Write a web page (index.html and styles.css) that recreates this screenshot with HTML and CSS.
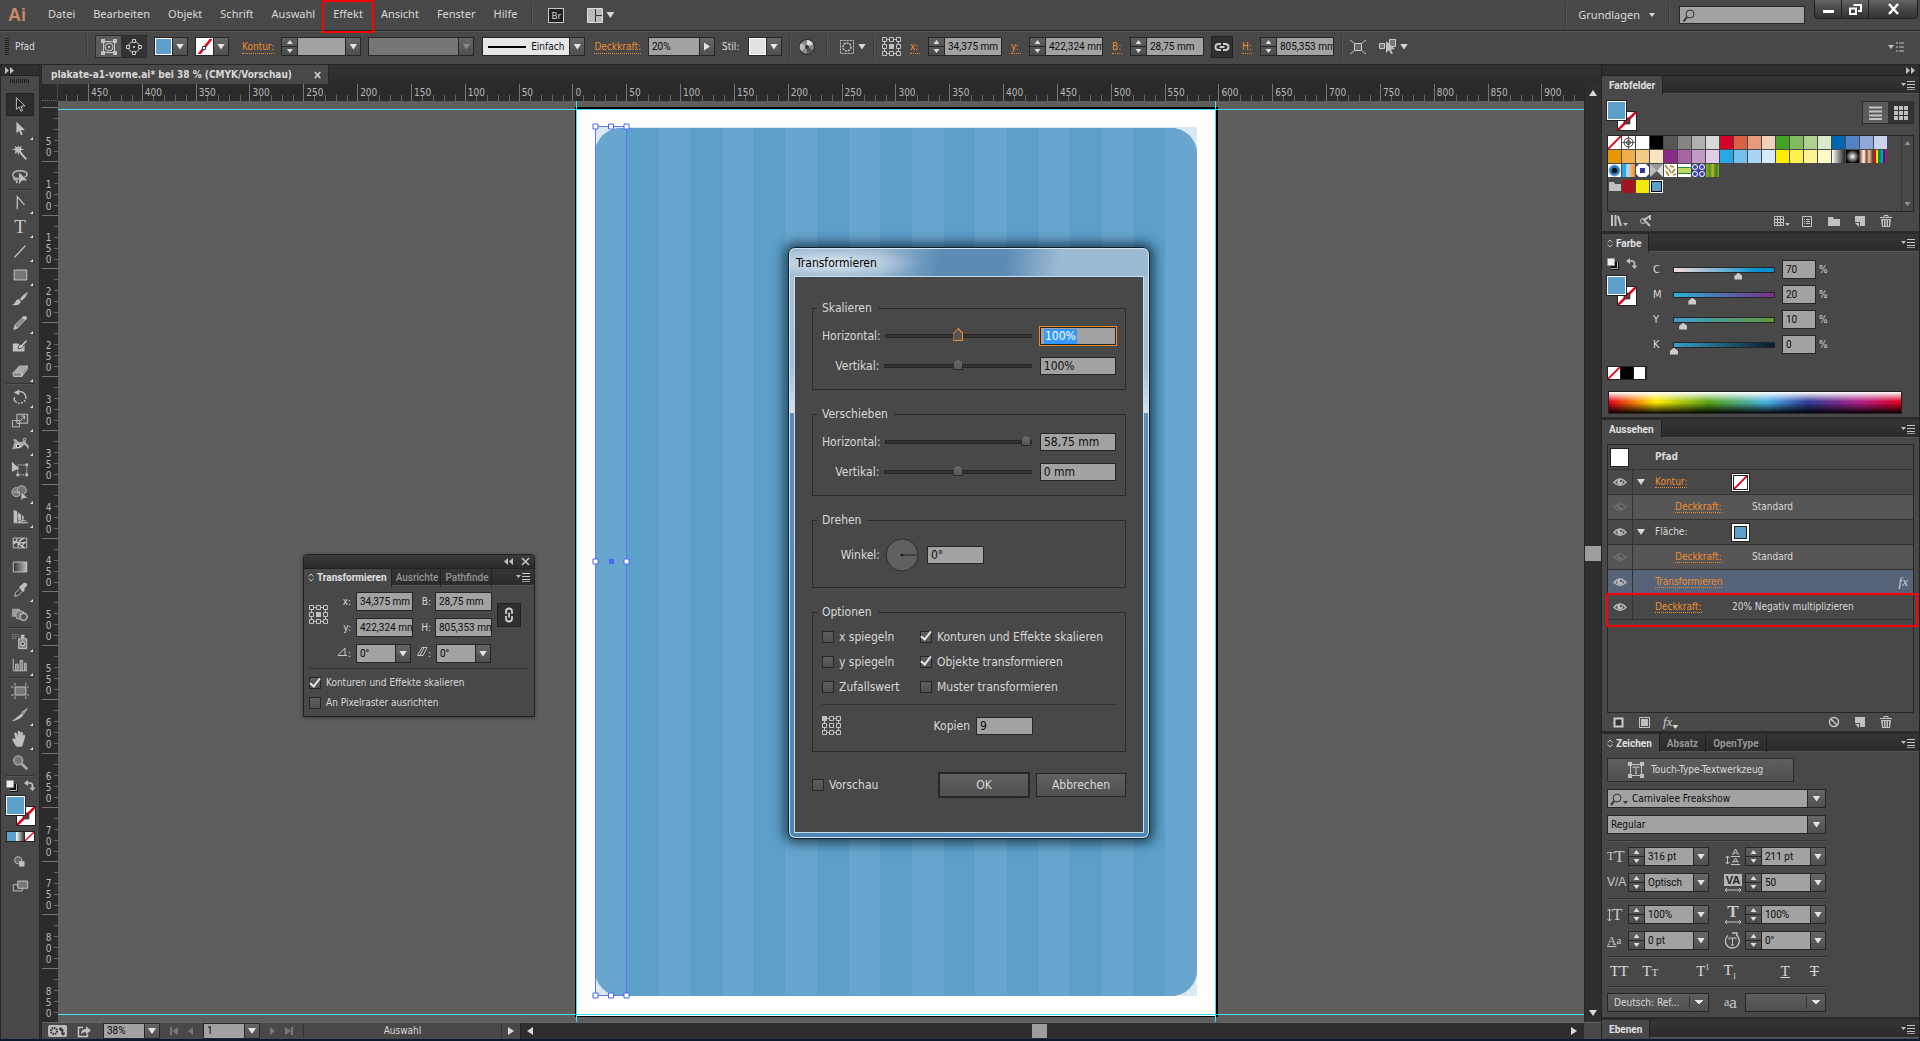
FILE: index.html
```html
<!DOCTYPE html>
<html lang="de">
<head>
<meta charset="utf-8">
<title>plakate-a1-vorne.ai</title>
<link rel="stylesheet" href="styles.css">
</head>
<body>
<svg class="defs" aria-hidden="true">
  <symbol id="ref" viewBox="0 0 19 19"><path d="M5 2.500h3M11 2.500h3M5 16.500h3M11 16.500h3M2.500 5v2M16.500 5v2M2.500 12v2M16.500 12v2" class="ln"/><path d="M.5.500h4v4h-4zM7.500.500h4v4h-4zM14.500.500h4v4h-4zM.5 7.500h4v4h-4zM14.500 7.500h4v4h-4zM.5 14.500h4v4h-4zM7.500 14.500h4v4h-4zM14.500 14.500h4v4h-4zM7.500 7.500h4v4h-4z" class="ln"/></symbol>
  <symbol id="menu" viewBox="0 0 14 10"><path d="M0 3h5L2.500 6z" class="fl"/><path d="M6 1.500h8M6 4.500h8M6 7.500h8M6 9.800h8" class="ln"/></symbol>
  <symbol id="new" viewBox="0 0 12 12"><path d="M1 1h10v10H6V7H1z" class="fl"/><path d="M1 8h4v4z" class="fl"/></symbol>
  <symbol id="trash" viewBox="0 0 12 12"><path d="M0 2.500h12M4 2V.500h4V2" class="ln"/><path d="M1 4h10l-1 8H2z" class="fl"/><path d="M3.500 5v6M6 5v6M8.500 5v6" stroke="#484848" fill="none"/></symbol>
  <symbol id="eye" viewBox="0 0 14 10"><path d="M1 5.500Q7-1.500 13 5.500 7 11 1 5.500z" fill="none" stroke="currentColor" stroke-width="1.500"/><circle cx="7" cy="5" r="2.800" fill="currentColor"/><circle cx="8" cy="4" r="1" fill="#333"/></symbol>
  <symbol id="defcol" viewBox="0 0 12 12"><path d="M4 4h8v8H4z" fill="#111"/><path d="M10.500 4v6.500H4" fill="none" stroke="#bbb"/><path d="M.5.500h7v7h-7z" fill="#eee" stroke="#999"/></symbol>
  <symbol id="swap" viewBox="0 0 11 11"><path d="M2 3h4q2.500 0 2.500 3v3" class="ln" stroke-width="1.500"/><path d="M0 3l4-3v6zM5.500 7.500h6l-3 3.500z" class="fl"/></symbol>
  <symbol id="folder" viewBox="0 0 12 10"><path d="M0 1h5l1 2h6v7H0z" class="fl"/></symbol>
  <symbol id="link" viewBox="0 0 16 10"><path d="M7 2H4.500a3 3 0 0 0 0 6H7M9 2h2.500a3 3 0 0 1 0 6H9M5.500 5h5" fill="none" stroke="#ccc" stroke-width="1.800"/></symbol>
  <symbol id="none" viewBox="0 0 14 14" preserveAspectRatio="none"><path d="M0 0h14v14H0z" fill="#fff"/><path d="M0 14L14 0" stroke="#e3001b" stroke-width="2"/></symbol>
  <symbol id="updown" viewBox="0 0 6 9"><path d="M.7 3.500L3 1l2.300 2.500M.7 5.500L3 8l2.300-2.500" class="ln"/></symbol>
</svg>

<header class="menubar">
  <span class="logo">Ai</span>
  <nav class="menus" aria-label="Hauptmenü">
    <a href="#datei">Datei</a><a href="#bearbeiten">Bearbeiten</a><a href="#objekt">Objekt</a><a href="#schrift">Schrift</a><a href="#auswahl">Auswahl</a><a href="#effekt" class="marked">Effekt</a><a href="#ansicht">Ansicht</a><a href="#fenster">Fenster</a><a href="#hilfe">Hilfe</a>
  </nav>
  <i class="vsep"></i>
  <button class="bridge">Br</button>
  <button class="plain arrange" aria-label="Dokumente anordnen"><svg width="16" height="15"><path d="M.5.500h15v14H.5z" fill="#bbb" stroke="#ddd"/><path d="M8.500 1v13M9 7.500h6" stroke="#333" fill="none"/></svg><b class="tri"></b></button>
  <span class="grow"></span>
  <i class="vsep"></i>
  <button class="plain workspace">Grundlagen <b class="tri small"></b></button>
  <i class="vsep"></i>
  <label class="search"><svg width="12" height="13"><circle cx="7" cy="5" r="4" fill="none" stroke="#333"/><path d="M4 8L.5 12.500" stroke="#333" stroke-width="2"/></svg><input type="search" aria-label="Suchen"></label>
  <span class="winbtns">
    <button aria-label="Minimieren"><svg width="11" height="10"><path d="M0 6h11v3H0z" fill="#fff"/></svg></button>
    <button aria-label="Wiederherstellen"><svg width="13" height="11"><path d="M4.500 1h7.500v6H9" fill="none" stroke="#fff" stroke-width="2"/><path d="M1 4.500h6V10H1z" fill="none" stroke="#fff" stroke-width="2"/></svg></button>
    <button class="close" aria-label="Schließen"><svg width="11" height="10"><path d="M1 0l9 10M10 0L1 10" stroke="#fff" stroke-width="2.500"/></svg></button>
  </span>
</header>

<section class="control" aria-label="Steuerung">
  <i class="grip"></i>
  <span class="kind">Pfad</span>
  <i class="vsep"></i>
  <span class="pair">
    <button aria-label="Form"><svg width="18" height="18"><path d="M3.500 3.500h11v11h-11z" class="ln"/><circle cx="9" cy="9" r="4" class="ln"/><path d="M8 8h2v2H8zM1 1h4v4H1zM13 1h4v4h-4zM1 13h4v4H1zM13 13h4v4h-4z" class="fl"/></svg></button>
    <button class="on" aria-label="Isolieren"><svg width="18" height="18"><circle cx="9" cy="9" r="5.500" class="ln"/><path d="M8 8h2v2H8z" class="fl"/><path d="M7.500 1.500h3v3h-3zM7.500 13.500h3v3h-3zM1.500 7.500h3v3h-3zM13.500 7.500h3v3h-3z" fill="#333" stroke="#ccc"/></svg></button>
  </span>
  <span class="combo"><button class="sw blue" aria-label="Fläche"></button><button class="drop" aria-label="Fläche wählen"></button></span>
  <span class="combo"><button class="sw" aria-label="Kontur"><svg width="16" height="20"><use href="#none"/><path d="M6.500 8.500h3v3h-3z" fill="#fff" stroke="#333"/></svg></button><button class="drop" aria-label="Konturfarbe wählen"></button></span>
  <label class="lnk first" for="kontur">Kontur:</label>
  <span class="num w80"><span class="spin"><button aria-label="mehr"></button><button aria-label="weniger"></button></span><input id="kontur"><button class="drop" aria-label="Konturstärke"></button></span>
  <span class="combo off w106"><input aria-label="Breitenprofil" disabled><button class="drop" aria-label="Profil wählen" disabled></button></span>
  <span class="combo brush w103"><button class="stroke"><i></i>Einfach</button><button class="drop" aria-label="Pinsel wählen"></button></span>
  <label class="lnk" for="deck">Deckkraft:</label>
  <span class="combo w67"><input id="deck" value="20%"><button class="drop right" aria-label="Deckkraft wählen"></button></span>
  <span class="lbl">Stil:</span>
  <span class="combo"><button class="sw light" aria-label="Stil"></button><button class="drop" aria-label="Stil wählen"></button></span>
  <i class="vsep"></i>
  <button class="plain" aria-label="Bildmaterial neu färben"><svg width="18" height="18"><circle cx="9" cy="9" r="7.500" fill="#888" stroke="#222"/><path d="M9 9V2a7 7 0 0 1 6 4z" fill="#ddd"/><path d="M9 9l6 3a7 7 0 0 1-6 4z" fill="#555"/><path d="M9 9l-6 4a7 7 0 0 1 0-8z" fill="#bbb"/><circle cx="9" cy="9" r="2" fill="#333"/></svg></button>
  <i class="vsep wide"></i>
  <button class="plain" aria-label="Ausrichten"><svg width="16" height="16"><path d="M1.500 1.500h13v13h-13z" class="ln" stroke-dasharray="2 1"/><circle cx="8" cy="8" r="4" class="ln" stroke-width="1.500" stroke-dasharray="2 1"/></svg><b class="tri"></b></button>
  <i class="vsep"></i>
  <svg width="19" height="19" class="refpt"><use href="#ref"/><path d="M7 7h5v5H7z" class="fl"/></svg>
  <label class="lnk ax" for="cx">x:</label>
  <span class="num w74"><span class="spin"><button aria-label="mehr"></button><button aria-label="weniger"></button></span><input id="cx" value="34,375 mm"></span>
  <label class="lnk ax" for="cy">y:</label>
  <span class="num w74"><span class="spin"><button aria-label="mehr"></button><button aria-label="weniger"></button></span><input id="cy" value="422,324 mm"></span>
  <label class="lnk ax" for="cb">B:</label>
  <span class="num w74"><span class="spin"><button aria-label="mehr"></button><button aria-label="weniger"></button></span><input id="cb" value="28,75 mm"></span>
  <button class="chain" aria-label="Proportionen erhalten"><svg width="16" height="10"><use href="#link"/></svg></button>
  <label class="lnk ax" for="ch">H:</label>
  <span class="num w74"><span class="spin"><button aria-label="mehr"></button><button aria-label="weniger"></button></span><input id="ch" value="805,353 mm"></span>
  <i class="vsep"></i>
  <button class="plain" aria-label="Ausgewähltes Objekt isolieren"><svg width="16" height="14"><path d="M4.500 3.500h7v7h-7z" fill="#666" stroke="#ccc"/><path d="M0 0l4 3M16 0l-4 3M0 14l4-3M16 14l-4-3" class="ln"/></svg></button>
  <button class="plain last" aria-label="Ähnliche auswählen"><svg width="18" height="15"><path d="M.5 4.500h5v5h-5zM10.500.500h6v7h-6z" fill="#777" stroke="#ccc"/><path d="M7 2l9 8-4 .5 2 4-2 .5-2-4-3 3z" class="fl"/></svg><b class="tri"></b></button>
  <span class="grow"></span>
  <button class="plain" aria-label="Bedienfeldmenü"><svg width="16" height="12"><path d="M0 4h6L3 8z" class="fl"/><path d="M8 2h2M11 2h5M8 6h2M11 6h5M8 10h2M11 10h5" class="ln"/></svg></button>
</section>

<main class="work">
  <aside class="toolbox" aria-label="Werkzeuge">
    <div class="strip"><svg width="9" height="7"><path d="M0 0l4 3.500L0 7zM5 0l4 3.500L5 7z" class="fl"/></svg></div>
    <i class="gripx"></i>
    <div class="tools">
      <button class="on" aria-label="Auswahl"><svg viewBox="0 0 20 20"><path d="M6 2v13l3-3 2 5 2-1-2-4.500 4.500-.5z" fill="#222" stroke="#ccc"/></svg></button>
      <button class="more" aria-label="Direktauswahl"><svg viewBox="0 0 20 20"><path d="M6 2v13l3-3 2 5 2-1-2-4.500 4.500-.5z" class="fl"/></svg></button>
      <button aria-label="Zauberstab"><svg viewBox="0 0 20 20"><path d="M8 1l1 3 3-2-1 3 4 1-4 1 1 4-3-2-1 4-1-4-3 2 1-4-4-1 4-1-1-3 3 2z" class="fl"/><path d="M10 9l7 8" class="ln" stroke-width="2"/></svg></button>
      <button aria-label="Lasso"><svg viewBox="0 0 20 20"><path d="M9 12q-8-1-7-5t8-4 8 4q0 2-3 3.500M4 10q-2 3 1 3t1 4" fill="none" stroke="#bbb" stroke-width="1.600"/><path d="M9 5v13l3-4 6 0z" class="fl"/></svg></button>
      <hr>
      <button class="more" aria-label="Zeichenstift"><svg viewBox="0 0 20 20"><path d="M7 17V3l8 9" class="ln" stroke-width="1.400"/></svg></button>
      <button class="more ty" aria-label="Text">T</button>
      <button class="more" aria-label="Liniensegment"><svg viewBox="0 0 20 20"><path d="M4 17L16 4" class="ln" stroke-width="1.500"/></svg></button>
      <button class="more" aria-label="Rechteck"><svg viewBox="0 0 20 20"><path d="M3.500 4.500h14v11h-14z" fill="#777" stroke="#ccc"/></svg></button>
      <button aria-label="Pinsel"><svg viewBox="0 0 20 20"><path d="M19 2q-6 3-9 8l2 2q5-4 7-10z" class="fl"/><path d="M9 10q-3 0-4 3-1 3-4 3 7 3 10-3z" class="fl"/></svg></button>
      <button class="more" aria-label="Buntstift"><svg viewBox="0 0 20 20"><path d="M3 17l1.500-5L14 3q3-1 3 2l-9 10z" fill="#888" stroke="#bbb"/><path d="M3 18l1.500-5 3 2.500zM13 3q4-2 5 2l-2 2-4-3z" class="fl"/></svg></button>
      <button aria-label="Tropfenpinsel"><svg viewBox="0 0 20 20"><path d="M2 6h6l2 2q4-1 4-3l1 1v9H2z" class="fl"/><path d="M19 1q-5 2-7 6-4 0-4 5 6 0 6-4 4-3 5-7z" fill="#ccc" stroke="#444"/></svg></button>
      <button class="more" aria-label="Radiergummi"><svg viewBox="0 0 20 20"><path d="M2 12L9 4h9l-6 8z" fill="#aaa"/><path d="M2 12h10v4H3zM12 12l6-8v4l-6 8z" fill="#888" stroke="#ccc"/></svg></button>
      <hr>
      <button class="more" aria-label="Drehen"><svg viewBox="0 0 20 20"><path d="M6 5q7-3 10 3 2 5-3 8t-9-2q-1-2 0-4" class="ln" stroke-width="1.500" stroke-dasharray="16 1.500 2 1.500 2 1.500 2 1.500"/><path d="M3 5l6-3v6z" class="fl"/></svg></button>
      <button class="more" aria-label="Skalieren"><svg viewBox="0 0 20 20"><path d="M6.500 2.500h12v10h-12z" fill="#555" stroke="#ccc"/><path d="M1.500 9.500h8v7h-8z" class="ln"/><path d="M10 10l5-5M11.500 4.500H15V8" class="ln"/></svg></button>
      <button class="more" aria-label="Verkrümmen"><svg viewBox="0 0 20 20"><path d="M1 16q2-6 3-10l-2-2q3-2 5 1t6 1l4-3q-2 4 1 6t1 6q-2-5-5-5-2 4-7 4t-6 2z" fill="#aaa"/><circle cx="8" cy="11" r="2" fill="#333" stroke="#fff"/><circle cx="15" cy="4" r="1.500" fill="#444" stroke="#ccc"/></svg></button>
      <button aria-label="Frei transformieren"><svg viewBox="0 0 20 20"><path d="M7.500 5.500h10v11h-10z" class="ln" stroke-dasharray="2 1"/><path d="M1 2v11l8-3.500zM16 4h3v3h-3zM16 15h3v3h-3zM6 15h3v3H6z" class="fl"/></svg></button>
      <button class="more" aria-label="Formerstellung"><svg viewBox="0 0 20 20"><circle cx="6" cy="9" r="5" fill="#777" stroke="#bbb"/><circle cx="12" cy="7" r="5" fill="#777" stroke="#bbb"/><path d="M3 9h9" stroke="#fff" stroke-dasharray="1 1"/><path d="M11 8v11l3-3 5 0z" class="fl" stroke="#444"/></svg></button>
      <button class="more" aria-label="Perspektivenraster"><svg viewBox="0 0 20 20"><path d="M3 2l4 2v12H3zM8 5l3 2v6H8zM8 14l10 2H8zM12 8l2 1v4l-2-.5z" class="fl"/><path d="M3 9h8M3 16.500h16M8 13l9 1.500" class="ln"/></svg></button>
      <hr>
      <button aria-label="Gitter"><svg viewBox="0 0 20 20"><path d="M2.500 4.500h15v11h-15z" class="ln"/><path d="M2 11q4-1 5-6M2 8q7 3 15 1M8 15q-1-8 6-10M12 15q1-5 5-6M7 9q3 4 8 6" class="ln" stroke-width="1.500"/></svg></button>
      <button aria-label="Verlauf"><svg viewBox="0 0 20 20"><defs><linearGradient id="g1"><stop stop-color="#333"/><stop offset="1" stop-color="#bbb"/></linearGradient></defs><path d="M2.500 4.500h15v11h-15z" fill="url(#g1)" stroke="#ccc"/></svg></button>
      <button class="more" aria-label="Pipette"><svg viewBox="0 0 20 20"><path d="M4 16l1-4 5-5 3 3-5 5z" class="ln"/><path d="M9 5l2-1 3-3q4-1 4 3l-3 3v3l-2 1z" class="fl"/></svg></button>
      <button aria-label="Angleichen"><svg viewBox="0 0 20 20"><path d="M1 3h9v9H1z" fill="#999"/><rect x="5.500" y="5.500" width="9" height="9" rx="3" fill="#777" stroke="#bbb"/><circle cx="14" cy="12" r="4" fill="#555" stroke="#bbb" stroke-width="1.500"/></svg></button>
      <hr>
      <button class="more" aria-label="Symbol aufsprühen"><svg viewBox="0 0 20 20"><path d="M8.500 7.500h9v11h-9z" fill="#888" stroke="#ccc"/><path d="M11 3h4v4h-4z" class="fl"/><circle cx="13" cy="13" r="2" fill="#333" stroke="#eee"/><path d="M1 3h9M2 5h8M1 7h6" class="ln" stroke-dasharray="1 2"/></svg></button>
      <button class="more" aria-label="Diagramm"><svg viewBox="0 0 20 20"><path d="M2.500 3v13.500h15" class="ln"/><path d="M5 9h3v7H5zM10 5h3v11h-3zM15 8h2v8h-2z" fill="#888" stroke="#bbb"/></svg></button>
      <hr>
      <button aria-label="Zeichenfläche"><svg viewBox="0 0 20 20"><path d="M4.500 5.500h12v9h-12z" fill="#777" stroke="#ccc"/><path d="M4.500 1v3M16.500 1v3M4.500 16v3M16.500 16v3M0 5.500h3M18 5.500h2M0 14.500h3M18 14.500h2" class="ln"/></svg></button>
      <button class="more" aria-label="Slice"><svg viewBox="0 0 20 20"><path d="M1 17L12 8l2 2q-5 6-13 7z" class="fl"/><path d="M12 7l6-4-4 6z" fill="#888" stroke="#bbb"/></svg></button>
      <button class="more" aria-label="Hand"><svg viewBox="0 0 20 20"><path d="M6 18l-4-7q0-2 2-1l2 1-2-7q1-2 2 0l2 5V2q1-2 2 0v7l1-6q2-1 2 1l-1 6 2-4q2-1 1 2l-2 7-1 3z" class="fl" stroke="#c0c0c0"/></svg></button>
      <button aria-label="Zoom"><svg viewBox="0 0 20 20"><circle cx="8" cy="7" r="5" fill="#777" stroke="#aaa" stroke-width="1.500"/><path d="M12 11l6 6" stroke="#aaa" stroke-width="3"/></svg></button>
      <hr>
    </div>
    <div class="defrow"><svg width="12" height="12"><use href="#defcol"/></svg><svg width="11" height="11"><use href="#swap"/></svg></div>
    <div class="fs big"><svg class="st" viewBox="0 0 19 19"><use href="#none"/><path d="M6.500 6.500h6v6h-6z" fill="#484848" stroke="#222"/><path d="M0 19L19 0" stroke="#e3001b" stroke-width="1.500"/></svg><i class="fi"></i></div>
    <div class="modes"><i class="blue"></i><i class="grad"></i><svg width="9" height="9"><use href="#none"/></svg></div>
    <div class="tools foot">
      <button aria-label="Zeichenmodus"><svg viewBox="0 0 20 20"><circle cx="8" cy="8" r="4" fill="#666" stroke="#bbb"/><path d="M9 9h6v6H9z" class="fl"/></svg></button>
      <button aria-label="Bildschirmmodus"><svg viewBox="0 0 20 20"><path d="M2.500 8.500h10v7h-10z" class="ln"/><path d="M7.500 4.500h11v8h-11z" fill="#777" stroke="#ccc"/></svg></button>
    </div>
  </aside>

  <section class="doc">
    <div class="tabs"><div class="tab"><span>plakate-a1-vorne.ai* bei 38 % (CMYK/Vorschau)</span><button aria-label="Dokument schließen">×</button></div></div>
    <div class="stage">
      <div class="hruler"><i class="corner"></i><div class="hcells"><span>450</span><span>400</span><span>350</span><span>300</span><span>250</span><span>200</span><span>150</span><span>100</span><span>50</span><span>0</span><span>50</span><span>100</span><span>150</span><span>200</span><span>250</span><span>300</span><span>350</span><span>400</span><span>450</span><span>500</span><span>550</span><span>600</span><span>650</span><span>700</span><span>750</span><span>800</span><span>850</span><span>900</span></div></div>
      <div class="vruler"><span>50</span><span>100</span><span>150</span><span>200</span><span>250</span><span>300</span><span>350</span><span>400</span><span>450</span><span>500</span><span>550</span><span>600</span><span>650</span><span>700</span><span>750</span><span>800</span><span>850</span></div>
      <div class="canvas">
        <div class="artboard"></div>
        <div class="bed"><div class="poster"><i></i><i></i><i></i><i></i><i></i><i></i><i></i><i></i><i></i><i></i><i></i><i></i><i></i><i></i><i></i><i></i><i></i><i></i><i></i></div></div>
        <i class="guide h top"></i><i class="guide h bottom"></i><i class="guide v left"></i><i class="guide v right"></i>
        <svg class="sel" width="38" height="876"><path d="M3.500 3.500h31v869h-31z" fill="none" stroke="#5a78f0"/><g fill="#fff" stroke="#4a66f5"><path d="M1 1h5v5H1zM16.500 1h5v5h-5zM32 1h5v5h-5zM1 436h5v5H1zM32 436h5v5h-5zM1 870h5v5H1zM16.500 870h5v5h-5zM32 870h5v5h-5z"/></g><path d="M17 436h5v5h-5z" fill="#4a66f5"/></svg>

        <section class="float" aria-label="Transformieren Bedienfeld">
          <div class="fhead"><svg width="9" height="7"><path d="M4 0v7L0 3.500zM9 0v7L5 3.500z" class="fl"/></svg><svg width="7" height="7"><path d="M0 0l7 7M7 0L0 7" class="ln" stroke-width="1.600"/></svg></div>
          <div class="ptabs"><button class="act"><svg width="6" height="9"><use href="#updown"/></svg>Transformieren</button><button class="cut">Ausrichte</button><button class="cut">Pathfinde</button><span class="grow"></span><svg class="pm" width="14" height="10"><use href="#menu"/></svg></div>
          <div class="fgrid">
            <svg class="fref" width="19" height="19"><use href="#ref"/><path d="M7 7h5v5H7z" class="fl"/></svg>
            <div class="frow"><label for="fx">x:</label><input id="fx" value="34,375 mm"><label for="fb">B:</label><input id="fb" value="28,75 mm"></div>
            <button class="chain tall" aria-label="Proportionen erhalten"><svg width="10" height="16" viewBox="0 0 10 16"><path d="M2 7V4.500a3 3 0 0 1 6 0V7M2 9v2.500a3 3 0 0 0 6 0V9M5 5.500v5" fill="none" stroke="#ccc" stroke-width="1.800"/></svg></button>
            <div class="frow r2"><label for="fy">y:</label><input id="fy" value="422,324 mm"><label for="fh">H:</label><input id="fh" value="805,353 mm"></div>
            <div class="frow r3"><label for="fa"><svg width="11" height="9"><path d="M1 8.500h9M1 8.500L8 1v7" class="ln"/></svg>:</label><span class="combo"><input id="fa" value="0°"><button class="drop" aria-label="Winkel wählen"></button></span><label for="fv"><svg width="11" height="9"><path d="M.5 8.500L5 .5h5L6 8.500zM3 8.500l4-8" class="ln"/></svg>:</label><span class="combo"><input id="fv" value="0°"><button class="drop" aria-label="Verbiegen wählen"></button></span></div>
          </div>
          <div class="fchecks"><label><input type="checkbox" checked>Konturen und Effekte skalieren</label><label><input type="checkbox">An Pixelraster ausrichten</label></div>
        </section>

        <form class="dialog" role="dialog" aria-label="Transformieren">
          <h2>Transformieren</h2>
          <div class="dbody">
            <fieldset><legend>Skalieren</legend>
              <div class="drow"><label for="sh">Horizontal:</label><input type="range" class="focus" aria-label="Skalieren horizontal" value="50"><input id="sh" class="hot" value="100%"><span class="seltext">100%</span></div>
              <div class="drow"><label for="sv">Vertikal:</label><input type="range" aria-label="Skalieren vertikal" value="50"><input id="sv" value="100%"></div>
            </fieldset>
            <fieldset><legend>Verschieben</legend>
              <div class="drow"><label for="vh">Horizontal:</label><input type="range" aria-label="Verschieben horizontal" value="100"><input id="vh" value="58,75 mm"></div>
              <div class="drow"><label for="vv">Vertikal:</label><input type="range" aria-label="Verschieben vertikal" value="50"><input id="vv" value="0 mm"></div>
            </fieldset>
            <fieldset class="rot"><legend>Drehen</legend>
              <div class="drow"><label for="wi">Winkel:</label><svg width="34" height="34"><circle cx="17" cy="17" r="16" fill="#606060" stroke="#2a2a2a"/><path d="M17 17h15" stroke="#222"/><circle cx="17" cy="17" r="1.500" fill="#222"/></svg><input id="wi" class="short" value="0°"></div>
            </fieldset>
            <fieldset class="opts"><legend>Optionen</legend>
              <div class="checks"><label><input type="checkbox">x spiegeln</label><label><input type="checkbox" checked>Konturen und Effekte skalieren</label><label><input type="checkbox">y spiegeln</label><label><input type="checkbox" checked>Objekte transformieren</label><label><input type="checkbox">Zufallswert</label><label><input type="checkbox">Muster transformieren</label></div>
              <div class="copies"><svg width="19" height="19"><use href="#ref"/><path d="M0 0h5v5H0z" class="fl"/></svg><label for="ko">Kopien</label><input id="ko" class="short" value="9"></div>
            </fieldset>
            <div class="actions"><label><input type="checkbox">Vorschau</label><span class="grow"></span><button type="button" class="ok">OK</button><button type="button">Abbrechen</button></div>
          </div>
        </form>
      </div>
      <div class="vscroll"><b class="tri up"></b><i></i><b class="tri"></b></div>
    </div>
    <footer class="status">
      <svg width="19" height="12"><rect x="0" y="0" width="19" height="12" rx="2" fill="#bbb"/><circle cx="6" cy="6" r="3" fill="none" stroke="#333" stroke-width="2" stroke-dasharray="1.500 .8"/><path d="M12 4h3v5M11 4l2-2v4zM13 8h4l-2 2.500z" stroke="#333" fill="#333" stroke-width=".6"/></svg>
      <svg width="13" height="12" class="share"><path d="M5 2.500H.5v9h9V9" class="ln" stroke-width="1.500"/><path d="M3 9q0-5 5-5V1l5 4.500-5 4V7Q5 7 3 9z" class="fl"/></svg>
      <span class="combo w57"><input aria-label="Zoomstufe" value="38%"><button class="drop" aria-label="Zoom wählen"></button></span>
      <span class="nav"><svg width="8" height="8"><path d="M0 0h2v8H0zM8 0v8L2 4z"/></svg><svg width="5" height="8"><path d="M5 0v8L0 4z"/></svg></span>
      <span class="combo w57"><input aria-label="Zeichenfläche" value="1"><button class="drop" aria-label="Zeichenfläche wählen"></button></span>
      <span class="nav"><svg width="5" height="8"><path d="M0 0v8l5-4z"/></svg><svg width="8" height="8"><path d="M6 0h2v8H6zM0 0v8l6-4z"/></svg></span>
      <span class="tool">Auswahl</span>
      <span class="playbox"><b class="tri rt"></b></span>
      <div class="hscroll"><b class="tri lt"></b><i></i><b class="tri rt"></b></div>
      <i class="sizer"></i>
    </footer>
  </section>

  <aside class="panels">
    <div class="strip"><svg width="9" height="7"><path d="M0 0l4 3.500L0 7zM5 0l4 3.500L5 7z" class="fl"/></svg></div>

    <section class="panel p1">
      <div class="ptabs"><button class="act">Farbfelder</button><span class="grow"></span><svg class="pm" width="14" height="10"><use href="#menu"/></svg></div>
      <div class="pbody">
        <div class="swtop"><div class="fs"><svg class="st" viewBox="0 0 19 19"><use href="#none"/><path d="M6.500 6.500h6v6h-6z" fill="#484848" stroke="#222"/><path d="M0 19L19 0" stroke="#e3001b" stroke-width="1.500"/></svg><i class="fi"></i></div><span class="grow"></span><span class="pair"><button aria-label="Listenansicht"><svg width="13" height="14"><path d="M0 1.500h13M0 5.500h13M0 9.500h13M0 13h13" class="ln" stroke-width="2"/></svg></button><button class="on" aria-label="Miniaturen"><svg width="14" height="14"><path d="M0 0h4v4H0zM5 0h4v4H5zM10 0h4v4h-4zM0 5h4v4H0zM5 5h4v4H5zM10 5h4v4h-4zM0 10h4v4H0zM5 10h4v4H5zM10 10h4v4h-4z" class="fl"/></svg></button></span></div>
        <div class="swbox">
          <div class="swatches">
            <i><svg width="13" height="13"><use href="#none"/></svg></i><i class="c-w"><svg width="13" height="13"><circle cx="6.500" cy="6.500" r="4.500" fill="none" stroke="#333"/><circle cx="6.500" cy="6.500" r="2" fill="none" stroke="#333"/><path d="M6.500 0v13M0 6.500h13" stroke="#333" stroke-width=".7"/></svg></i><i style="background:#fff"></i><i style="background:#000"></i><i style="background:#575757"></i><i style="background:#858585"></i><i style="background:#b0b0b0"></i><i style="background:#d9d9d9"></i><i style="background:#d40027"></i><i style="background:#de6044"></i><i style="background:#e99a7a"></i><i style="background:#f4cfb9"></i><i style="background:#43a125"></i><i style="background:#82ba62"></i><i style="background:#afd293"></i><i style="background:#d9e9cb"></i><i style="background:#0066b3"></i><i style="background:#5082c5"></i><i style="background:#90a8d8"></i><i style="background:#c9d3ee"></i>
            <i style="background:#ea9600"></i><i style="background:#efae4b"></i><i style="background:#f5ca89"></i><i style="background:#fae4c4"></i><i style="background:#8a2b8a"></i><i style="background:#a665a6"></i><i style="background:#c19ac5"></i><i style="background:#decde4"></i><i style="background:#27a8e6"></i><i style="background:#73bfee"></i><i style="background:#a8d5f5"></i><i style="background:#d6ecfb"></i><i style="background:#ffed00"></i><i style="background:#fff04d"></i><i style="background:#fff592"></i><i style="background:#fffacc"></i><i class="g-lin"></i><i class="g-rad"></i><i class="g-cop"></i><i class="g-rain"></i>
            <i class="g-eye"></i><i class="g-sky"></i><i class="c-w"><svg width="13" height="13"><path d="M4 4h5v5H4zM0 0h3L0 3zM13 0v3l-3-3zM0 13v-3l3 3zM13 13h-3l3-3z" fill="#2b3a9b"/></svg></i><i><svg width="13" height="13"><path d="M0 0h13v13H0z" fill="#999"/><path d="M0 0l7 7-7 6z" fill="#bbb"/><path d="M0 13l7-6 6 6z" fill="#555"/><path d="M13 0L7 7l6 6z" fill="#ddd"/></svg></i><i class="c-w"><svg width="13" height="13"><path d="M1 1l3 4M6 2l4 1M11 5l-3 4M2 7l3 5M9 11l3-1M5 5l2 4" stroke="#a8842c" stroke-width="1.500"/></svg></i><i class="g-str"></i><i class="c-w"><svg width="13" height="13"><path d="M0 0h13v13H0z" fill="#3d45a5"/><g fill="none" stroke="#fff"><circle cx="3" cy="3" r="2.500"/><circle cx="10" cy="3" r="2.500"/><circle cx="3" cy="10" r="2.500"/><circle cx="10" cy="10" r="2.500"/></g></svg></i><i class="g-leaf"></i>
          </div>
          <div class="swatches group"><i class="fol"><svg width="12" height="10"><use href="#folder"/></svg></i><i style="background:#a31621"></i><i style="background:#f0ea0a"></i><i class="picked"></i></div>
          <div class="sbar"><b class="tri up small"></b><b class="tri small"></b></div>
        </div>
        <div class="pfoot"><svg width="17" height="12"><path d="M1 0v11M4.500 0v11M7 1l3 10" class="ln" stroke-width="2"/><path d="M12 8h5l-2.500 3z" class="fl"/></svg><svg class="share" width="11" height="12"><circle cx="3" cy="6" r="2.500" class="ln"/><path d="M10 1L4 5l6 6M10 0v5" class="ln" stroke-width="1.800"/></svg><span class="grow"></span><svg class="g26 wide" width="16" height="11"><path d="M.5.500h9v9h-9zM3.500 0v10M6.500 0v10M0 3.500h10M0 6.500h10" class="ln"/><path d="M11 7h5l-2.500 3z" class="fl"/></svg><svg class="g26 wide" width="10" height="11"><path d="M.5.500h9v10h-9zM2 3.500h1M4 3.500h4M2 5.500h1M4 5.500h4M2 7.500h1M4 7.500h4" class="ln"/></svg><svg class="g26" width="12" height="10"><use href="#folder"/></svg><svg class="g26" width="12" height="12"><use href="#new"/></svg><svg width="12" height="12"><use href="#trash"/></svg></div>
      </div>
    </section>

    <section class="panel p2">
      <div class="ptabs"><button class="act"><svg width="6" height="9"><use href="#updown"/></svg>Farbe</button><span class="grow"></span><svg class="pm" width="14" height="10"><use href="#menu"/></svg></div>
      <div class="pbody">
        <div class="color">
          <div class="pick"><div class="defrow"><svg width="12" height="12"><use href="#defcol"/></svg><svg width="11" height="11"><use href="#swap"/></svg></div><div class="fs"><svg class="st" viewBox="0 0 19 19"><use href="#none"/><path d="M6.500 6.500h6v6h-6z" fill="#484848" stroke="#222"/><path d="M0 19L19 0" stroke="#e3001b" stroke-width="1.500"/></svg><i class="fi"></i></div></div>
          <div class="cmyk">
            <div class="c"><label for="c">C</label><input type="range" aria-label="Cyan" value="70"><input id="c" value="70"><span>%</span></div>
            <div class="m"><label for="m">M</label><input type="range" aria-label="Magenta" value="20"><input id="m" value="20"><span>%</span></div>
            <div class="y"><label for="y">Y</label><input type="range" aria-label="Gelb" value="10"><input id="y" value="10"><span>%</span></div>
            <div class="k"><label for="k">K</label><input type="range" aria-label="Schwarz" value="0"><input id="k" value="0"><span>%</span></div>
          </div>
        </div>
        <div class="trio"><svg width="12" height="12"><use href="#none"/></svg><i class="bk"></i><i class="wh"></i></div>
        <div class="spectrum"></div>
      </div>
    </section>

    <section class="panel p3">
      <div class="ptabs"><button class="act">Aussehen</button><span class="grow"></span><svg class="pm" width="14" height="10"><use href="#menu"/></svg></div>
      <div class="pbody">
        <div class="looks">
          <div class="look head"><i class="thumb"></i><b>Pfad</b></div>
          <div class="look"><span class="ey"><svg width="14" height="10"><use href="#eye"/></svg></span><b class="tri"></b><span class="nm"><a href="#kontur">Kontur:</a></span><i class="chip"><svg width="13" height="13"><use href="#none"/></svg></i></div>
          <div class="look sub"><span class="ey dim"><svg width="14" height="10"><use href="#eye"/></svg></span><span class="nm"><a href="#deck">Deckkraft:</a></span><span>Standard</span></div>
          <div class="look"><span class="ey"><svg width="14" height="10"><use href="#eye"/></svg></span><b class="tri"></b><span class="nm">Fläche:</span><i class="chip fill"></i></div>
          <div class="look sub"><span class="ey dim"><svg width="14" height="10"><use href="#eye"/></svg></span><span class="nm"><a href="#deck">Deckkraft:</a></span><span>Standard</span></div>
          <div class="look cur"><span class="ey"><svg width="14" height="10"><use href="#eye"/></svg></span><span class="nm"><a href="#sh">Transformieren</a></span><span class="grow"></span><em class="fx">fx</em></div>
          <div class="look last"><span class="ey"><svg width="14" height="10"><use href="#eye"/></svg></span><span class="nm"><a href="#deck">Deckkraft:</a></span><span>20% Negativ multiplizieren</span></div>
        </div>
        <div class="pfoot"><svg class="g12" width="11" height="11"><path d="M1.500 1.500h8v8h-8z" fill="#333" stroke="#ccc" stroke-width="2"/></svg><svg class="g12" width="11" height="11"><path d="M.5.500h10v10H.5z" class="ln"/><path d="M2 2h7v7H2z" class="fl"/></svg><em class="fx">fx<b class="tri small"></b></em><span class="grow"></span><svg class="g26" width="12" height="12"><circle cx="6" cy="6" r="4.500" class="ln" stroke-width="1.500"/><path d="M3 3l6 6" class="ln" stroke-width="1.500"/></svg><svg class="g26" width="12" height="12"><use href="#new"/></svg><svg width="12" height="12"><use href="#trash"/></svg></div>
      </div>
    </section>

    <section class="panel p4">
      <div class="ptabs"><button class="act"><svg width="6" height="9"><use href="#updown"/></svg>Zeichen</button><button>Absatz</button><button>OpenType</button><span class="grow"></span><svg class="pm" width="14" height="10"><use href="#menu"/></svg></div>
      <div class="pbody chars">
        <button class="touch"><svg width="16" height="16"><path d="M2.500 2.500h11v11h-11z" class="ln"/><path d="M0 0h4v4H0zM12 0h4v4h-4zM0 12h4v4H0zM12 12h4v4h-4z" class="fl"/><path d="M5 6V5h6v1M8 5v6M7 11.500h2" class="ln"/></svg>Touch-Type-Textwerkzeug</button>
        <span class="combo full"><label class="ficon" for="font"><svg width="18" height="12"><circle cx="7" cy="5" r="4" fill="none" stroke="#333"/><path d="M4 8L1 12" stroke="#333" stroke-width="2"/><path d="M13 8h5l-2.500 3z" fill="#333"/></svg></label><input id="font" value="Carnivalee Freakshow"><button class="drop" aria-label="Schrift wählen"></button></span>
        <span class="combo full"><input aria-label="Schriftschnitt" value="Regular"><button class="drop" aria-label="Schnitt wählen"></button></span>
        <hr>
        <div class="cgrid">
          <label class="gl" for="a1"><small>T</small>T</label><span class="num"><span class="spin"><button aria-label="mehr"></button><button aria-label="weniger"></button></span><input id="a1" value="316 pt"><button class="drop" aria-label="Schriftgrad"></button></span>
          <label class="gl" for="a2"><svg width="17" height="18"><path d="M3.500 8v8M1.500 10l2-2 2 2M1.500 14l2 2 2-2M7 8.500h9M7 16.500h9M8.500 7l3-6 3 6M9.500 5h4M8.500 15l3-5 3 5M9.500 13.500h4" class="ln"/></svg></label><span class="num"><span class="spin"><button aria-label="mehr"></button><button aria-label="weniger"></button></span><input id="a2" value="211 pt"><button class="drop" aria-label="Zeilenabstand"></button></span>
          <label class="gl sans" for="a3">V/A</label><span class="num"><span class="spin"><button aria-label="mehr"></button><button aria-label="weniger"></button></span><input id="a3" value="Optisch"><button class="drop" aria-label="Kerning"></button></span>
          <label class="gl va" for="a4"><span>VA</span><svg width="18" height="4"><path d="M1 2h16M3 0L1 2l2 2M15 0l2 2-2 2" class="ln"/></svg></label><span class="num"><span class="spin"><button aria-label="mehr"></button><button aria-label="weniger"></button></span><input id="a4" value="50"><button class="drop" aria-label="Laufweite"></button></span>
        </div>
        <hr>
        <div class="cgrid">
          <label class="gl" for="a5"><svg width="5" height="14"><path d="M2.500 1v12M.5 3l2-2 2 2M.5 11l2 2 2-2" class="ln"/></svg>T</label><span class="num"><span class="spin"><button aria-label="mehr"></button><button aria-label="weniger"></button></span><input id="a5" value="100%"><button class="drop" aria-label="Vertikale Skalierung"></button></span>
          <label class="gl va tu" for="a6"><b>T</b><svg width="18" height="4"><path d="M1 2h16M3 0L1 2l2 2M15 0l2 2-2 2" class="ln"/></svg></label><span class="num"><span class="spin"><button aria-label="mehr"></button><button aria-label="weniger"></button></span><input id="a6" value="100%"><button class="drop" aria-label="Horizontale Skalierung"></button></span>
          <label class="gl bs" for="a7"><u>A</u><sup>a</sup></label><span class="num"><span class="spin"><button aria-label="mehr"></button><button aria-label="weniger"></button></span><input id="a7" value="0 pt"><button class="drop" aria-label="Grundlinienversatz"></button></span>
          <label class="gl" for="a8"><svg width="17" height="17"><path d="M4 3.500a7 7 0 1 0 8-.5M8 1h5v4" class="ln" stroke-width="1.300"/><path d="M5 7.500V6h7v1.500M8.500 6v7M7 13h3" class="ln"/></svg></label><span class="num"><span class="spin"><button aria-label="mehr"></button><button aria-label="weniger"></button></span><input id="a8" value="0°"><button class="drop" aria-label="Zeichendrehung"></button></span>
        </div>
        <hr>
        <div class="caps"><button>TT</button><button>T<small>T</small></button><button>T<sup>1</sup></button><button>T<sub>1</sub></button><button><u>T</u></button><button><s>T</s></button></div>
        <hr>
        <div class="cgrid lang"><select aria-label="Sprache"><option>Deutsch: Ref...</option></select><label class="gl aa" for="aa"><small>a</small>a</label><select id="aa"><option></option></select></div>
      </div>
    </section>

    <section class="panel p5">
      <div class="ptabs"><button class="act">Ebenen</button><span class="grow"></span><svg class="pm" width="14" height="10"><use href="#menu"/></svg></div>
    </section>
    <i class="mark"></i>
  </aside>
</main>
</body>
</html>
```
FILE: styles.css
```css
* { box-sizing: border-box; }
:root { --ui: "DejaVu Sans Condensed", "DejaVu Sans", sans-serif; --num: Roboto, "Liberation Sans", sans-serif; --bg: #484848; --dark: #2b2b2b; --edge: #262626; --field: #a2a2a2; --blue: #5c9fc9; --orange: #ef8c2c; }
body { margin: 0; height: 100vh; display: flex; flex-direction: column; overflow: hidden; background: #0d1a2b; color: #d8d8d8; font: 10px/14px var(--ui); }
button, input, select { font: inherit; color: inherit; margin: 0; padding: 0; border: 0; border-radius: 0; background: none; min-width: 0; }
i, em { font-style: normal; }
svg { display: block; flex: none; overflow: visible; }
.defs { display: none; }
.ln { fill: none; stroke: #c4c4c4; }
.fl { fill: #c0c0c0; }
.grow { flex: 1; }
a { color: inherit; text-decoration: none; }
.tri { width: 8px; height: 6px; background: #d8d8d8; clip-path: polygon(0 0, 100% 0, 50% 100%); flex: none; }
.tri.small { width: 6px; height: 4px; }
.tri.up { clip-path: polygon(50% 0, 100% 100%, 0 100%); }
.tri.rt, .tri.lt { width: 6px; height: 8px; clip-path: polygon(0 0, 100% 50%, 0 100%); }
.tri.lt { clip-path: polygon(100% 0, 100% 100%, 0 50%); }
.vsep { width: 2px; height: 24px; border-left: 1px solid #393939; border-right: 1px solid #555; flex: none; }
.plain { display: flex; align-items: center; gap: 3px; }
hr { border: 0; border-top: 1px solid #333; border-bottom: 1px solid #545454; margin: 0; height: 2px; }

/* menu bar */
.menubar { display: flex; align-items: center; height: 31px; background: var(--bg); border-bottom: 1px solid var(--edge); font: 11px/16px "Noto Sans", "Open Sans", sans-serif; padding-left: 8px; flex: none; }
.logo { width: 31px; font: bold 18px/24px "Liberation Sans", sans-serif; color: #c58a66; }
.menus { display: flex; padding-right: 5px; }
.menus a { padding: 6px 9px; line-height: 16px; border: 2px solid transparent; margin: 0 -2px; }
.menus .marked { border-color: #f00; margin: 2px -2px 0; height: 33px; position: relative; z-index: 2; padding-top: 4px; }
.bridge { width: 16px; height: 15px; border: 1px solid #c8c8c8; background: #222; font-size: 9px; line-height: 13px; margin: 0 23px 0 15px; }
.workspace { padding: 0 13px 0 11px; gap: 9px; }
.search { display: flex; align-items: center; width: 126px; height: 18px; margin: 0 9px; padding-left: 3px; background: var(--field); border: 1px solid var(--edge); flex: none; }
.search input { flex: 1; color: #111; outline: 0; }
.winbtns { display: flex; align-self: flex-start; height: 19px; margin-right: 2px; border: 1px solid #222; border-top: 0; border-radius: 0 0 4px 4px; overflow: hidden; background: linear-gradient(#666, #4a4a4a 45%, #333); }
.winbtns button { width: 27px; display: grid; place-items: center; border-right: 1px solid #222; }
.winbtns .close { width: 48px; border: 0; }

/* control bar */
.control { display: flex; align-items: center; gap: 7px; height: 34px; padding: 0 16px 3px 5px; background: var(--bg); border-top: 1px solid #5a5a5a; border-bottom: 1px solid var(--edge); flex: none; }
.grip { width: 4px; height: 18px; background: repeating-linear-gradient(#1c1c1c 0 1px, #4d4d4d 1px 2px); flex: none; }
.kind { width: 64px; margin-left: -1px; }
.pair { display: flex; border: 1px solid #2c2c2c; background: #5c5c5c; flex: none; }
.pair button { width: 25px; height: 21px; display: grid; place-items: center; }
.pair .on { background: #333; }
.combo, .num { display: flex; height: 19px; border: 1px solid var(--edge); flex: none; }
.combo input, .num input { flex: 1; width: 0; }
.combo input, .num input, .frow input, .cmyk input:not([type="range"]) { background: var(--field); color: #0c0c0c; padding: 0 0 0 3px; font-family: var(--num); }
.drop { width: 15px; border-left: 1px solid var(--edge); background: linear-gradient(#666, #505050); display: grid; place-items: center; flex: none; }
.drop::before { content: ""; width: 8px; height: 6px; background: #e4e4e4; clip-path: polygon(0 0, 100% 0, 50% 100%); }
.drop.right::before { width: 6px; height: 8px; clip-path: polygon(0 0, 100% 50%, 0 100%); }
.sw { width: 17px; border: 1px solid #fff; background: #fff; overflow: hidden; }
.sw svg { margin: -1px; }
.sw.blue, .blue { background: var(--blue); }
.sw.light { background: #e2e2e2; }
.spin { width: 16px; display: grid; border-right: 1px solid var(--edge); background: linear-gradient(#606060, #4c4c4c); flex: none; }
.spin button { display: grid; place-items: center; }
.spin button + button { border-top: 1px solid var(--edge); }
.spin button::before { content: ""; width: 6px; height: 4px; background: #ddd; clip-path: polygon(50% 0, 100% 100%, 0 100%); }
.spin button + button::before { clip-path: polygon(0 0, 100% 0, 50% 100%); }
.lnk, .looks a { color: var(--orange); border-bottom: 1px dotted var(--orange); line-height: 13px; }
.lnk.first { margin-left: 6px; }
.brush { margin: 0 2px 0 1px; }
.wide.vsep { margin: 0 4px 0 3px; }
.ax { width: 10px; margin: 0 1px 0 2px; }
.lbl { width: 19px; }
.w80 { width: 80px; } .w106 { width: 106px; } .w103 { width: 103px; } .w67 { width: 67px; } .w74 { width: 74px; } .w57 { width: 57px; }
.off input { background: #767676; }
.off .drop::before { background: #888; }
.stroke { flex: 1; display: flex; align-items: center; gap: 5px; padding: 0 5px; background: #e6e6e6; color: #111; }
.stroke i { flex: 1; height: 2px; background: #000; }
.chain { width: 22px; height: 22px; display: grid; place-items: center; background: #303030; border: 1px solid #222; flex: none; }
.last.plain { margin-left: 6px; }

/* work area */
.work { flex: 1; display: flex; min-height: 0; margin-bottom: 2px; background: #303030; }
.strip { height: 11px; background: #2e2e2e; display: flex; align-items: center; padding: 0 4px; border-bottom: 1px solid #222; flex: none; }
.toolbox { width: 40px; display: flex; flex-direction: column; background: var(--bg); border: solid var(--edge); border-width: 0 1px; margin-right: 1px; flex: none; }
.gripx { width: 20px; height: 4px; margin: 3px 9px 10px; background: repeating-linear-gradient(90deg, #1c1c1c 0 1px, #4d4d4d 1px 2px); flex: none; }
.tools { display: flex; flex-direction: column; padding: 0 5px; }
.tools button { height: 24px; width: 28px; display: grid; place-items: center; position: relative; }
.tools .on { background: #2d2d2d; box-shadow: inset 0 0 0 1px #222; height: 23px; margin-bottom: 1px; }
.tools svg { width: 18px; height: 18px; }
.tools .more::after { content: ""; position: absolute; right: 1px; bottom: 1px; width: 3px; height: 3px; background: #ddd; clip-path: polygon(100% 0, 100% 100%, 0 100%); }
.ty { font: 19px/20px "Liberation Serif", serif; color: #ccc; }
.defrow { display: flex; justify-content: space-between; }
.toolbox .defrow { padding: 3px 4px 2px 5px; }
.fs { display: grid; grid-template-columns: 10px 9px 11px; grid-template-rows: 10px 9px 11px; width: 30px; height: 30px; }
.fs .st { grid-area: 2 / 2 / 4 / 4; width: 20px; height: 20px; border: 1px solid #222; }
.fs .fi { grid-area: 1 / 1 / 3 / 3; background: var(--blue); border: 1px solid #fff; outline: 1px solid #222; }
.toolbox .fs { margin: 2px 0 5px 5px; }
.modes { display: flex; margin: 0 5px 8px; border: 1px solid #222; width: 29px; }
.modes > * { width: 9px; height: 9px; }
.grad { background: linear-gradient(90deg, #fff, #222); }

.doc { flex: 1; min-width: 0; display: flex; flex-direction: column; border-left: 1px solid var(--edge); }
.tabs { height: 19px; background: linear-gradient(#333, #2b2b2b); display: flex; flex: none; }
.tab { display: flex; align-items: center; gap: 21px; padding: 0 6px 0 9px; background: var(--bg); font-weight: bold; border-right: 1px solid var(--edge); }
.tab button { font-size: 12px; line-height: 12px; }
.stage { flex: 1; min-height: 0; display: grid; grid-template: 17px 1fr / 16px 1fr 17px; }
.hruler { grid-column: 1 / 3; display: flex; background: #2b2b2b; overflow: hidden; }
.corner { width: 16px; flex: none; border: dotted #666; border-width: 0 1px 1px 0; }
.hcells { flex: 1; display: flex; margin-right: -11px; padding-left: 30px; color: #b8b8b8; background: repeating-linear-gradient(90deg, #666 0 1px, transparent 1px 11px) -3px 11px / 32px 6px no-repeat; }
.hcells span { flex: 1 1 0; padding: 3px 0 0 2px; line-height: 12px; border-left: 1px solid #777; background: repeating-linear-gradient(90deg, transparent 0 10px, #666 10px 11px) 0 11px / 48px 6px no-repeat; }
.vruler { display: flex; flex-direction: column; background: #2b2b2b; padding-top: 6px; border-top: 0; }
.vruler span { flex: 1; writing-mode: vertical-rl; text-orientation: upright; line-height: 12px; text-align: right; padding: 0 4px 3px 0; color: #b8b8b8; border-top: 1px solid #777; background: repeating-linear-gradient(transparent 0 10px, #666 10px 11px) right top / 4px 48px no-repeat; }
.canvas { position: relative; overflow: hidden; background: #5e5e5e; }
.artboard { position: absolute; left: 517px; top: 6px; width: 643px; height: 910px; background: #fff; border: 1px solid #000; border-width: 2px 2px 1px 1px; }
.bed { position: absolute; left: 537px; top: 26px; width: 602px; height: 869px; padding-top: 1px; background: #dbe9f3; }
.poster { height: 100%; display: flex; border-radius: 26px; overflow: hidden; background: var(--blue); }
.poster i { flex: 1; }
.poster i:nth-child(odd) { background: #68a6cf; }
.guide { position: absolute; background: #4df; }
.guide.h { left: 0; right: 0; height: 1px; }
.guide.v { top: 0; bottom: 0; width: 1px; }
.guide.top { top: 8px; } .guide.bottom { top: 913px; } .guide.left { left: 518px; } .guide.right { left: 1157px; }
.sel { position: absolute; left: 534px; top: 22px; }
.vscroll { grid-area: 1 / 3 / 3 / 4; background: #2e2e2e; border-left: 1px solid var(--edge); display: flex; flex-direction: column; align-items: center; justify-content: space-between; padding: 6px 0; }
.vscroll i { width: 100%; height: 15px; background: #9d9d9d; }

.status { height: 17px; display: flex; align-items: center; background: var(--bg); border-top: 1px solid #666; padding-left: 6px; flex: none; }
.status .share { margin: 0 12px 0 11px; }
.nav { width: 43px; display: flex; gap: 10px; justify-content: center; }
.nav path { fill: #777; }
.status .combo { height: 16px; }
.tool { width: 199px; text-align: center; border: solid #333; border-width: 0 1px; }
.playbox { width: 18px; display: grid; place-items: center; }
.hscroll { flex: 1; height: 16px; padding: 0 7px 0 6px; display: flex; align-items: center; justify-content: space-between; background: #2e2e2e; border-left: 1px solid #222; }
.hscroll i { width: 15px; height: 14px; margin-right: 26px; background: #9d9d9d; }
.sizer { width: 17px; }

/* panels */
.panels { width: 319px; display: flex; flex-direction: column; background: #2a2a2a; border: solid #222; border-width: 0 1px; position: relative; flex: none; }
.panels .strip { justify-content: flex-end; }
.panel { background: var(--bg); margin-bottom: 3px; display: flex; flex-direction: column; }
.ptabs { height: 18px; display: flex; align-items: center; background: linear-gradient(#353535, #2b2b2b); font: bold 10px/17px var(--num); flex: none; border-bottom: 1px solid #565656; }
.ptabs button { height: 18px; padding: 0 7px; display: flex; align-items: center; gap: 3px; color: #949494; border-right: 1px solid #222; margin-bottom: -1px; }
.ptabs .act { background: var(--bg); color: #e0e0e0; }
.ptabs .act:has(svg) { padding-left: 5px; }
.pm { margin-right: 4px; }
.pbody { flex: 1; padding: 6px 5px 0; display: flex; flex-direction: column; }
.p1 .pbody { padding-top: 7px; }
.p1 { height: 155px; } .p2 { height: 183px; } .p3 { height: 311px; } .p4 { height: 283px; } .p5 { margin: 0; flex: 1; }
.swtop { display: flex; height: 34px; }
.swtop .pair { align-self: flex-start; }
.swbox { border: 1px solid var(--edge); height: 77px; display: grid; grid-template: 44px 1fr / 1fr 12px; }
.swatches { display: grid; grid-template-columns: repeat(20, 14px); grid-auto-rows: 14px; }
.swatches i { width: 13px; height: 13px; overflow: hidden; }
.c-w { background: #fff; }
.sbar { grid-area: 1 / 2 / 3 / 3; border-left: 1px solid var(--edge); display: flex; flex-direction: column; align-items: center; justify-content: space-between; padding: 5px 0; opacity: .5; }
.g-lin { background: linear-gradient(90deg, #fff, #222); }
.g-rad { background: radial-gradient(#fff, #000 75%); }
.g-cop { background: linear-gradient(90deg, #9b5b3a, #fff 30%, #8b4a2a 50%, #e8c8b0 70%, #6b3216); }
.g-rain { background: linear-gradient(90deg, #e2001a 15%, #ffed00 15% 32%, #008e39 32% 50%, #009fe3 50% 66%, #312783 66% 84%, #a3195b 84%); }
.g-eye { background: radial-gradient(#111 25%, #2a7cc8 35% 50%, #fff 70%); }
.g-sky { background: linear-gradient(90deg, #27a8e6 30%, #a8d5f5 32% 55%, #f4b98a 60%, #e8951a); }
.g-str { background: linear-gradient(#fff 20%, #1a8f3a 20% 32%, #bcd85f 32% 68%, #1a8f3a 68% 80%, #fff 80%); }
.g-leaf { background: linear-gradient(90deg, #a8a312, #3f9a2a 30%, #c2b51a 50%, #2e7f2b 80%, #9dab20); }
.fol { padding: 1px 0 0 1px; }
.picked { background: var(--blue); border: 1px solid #fff; box-shadow: inset 0 0 0 1px #000; }
.pfoot { display: flex; align-items: center; padding: 0 22px 0 4px; height: 18px; }
.pfoot .share { margin-left: 12px; }
.g12 { margin: 0 8px 0 4px; }
.g12 + .g12 { margin-left: 8px; }
.p3 .pfoot { padding-left: 2px; }
.p3 .g12 { margin-right: 7px; }
.g26 { margin-right: 14px; }
.g26.wide { margin-right: 16px; }
.g26.wide + .g26.wide { margin-left: -4px; }
.fx { font: italic 13px/14px "Liberation Serif", serif; color: #d0d0d0; display: flex; align-items: center; }
.p3 .pfoot .fx { margin-left: 6px; }
.p3 .pfoot .tri { align-self: flex-end; }

.color { display: flex; gap: 16px; height: 112px; }
.pick { width: 30px; }
.pick .defrow { height: 18px; }
.cmyk { margin-top: -1px; }
.cmyk div { display: flex; align-items: center; height: 25px; }
.cmyk label { width: 20px; font-size: 11px; }
.cmyk div > input:not([type="range"]) { width: 34px; height: 19px; border: 1px solid var(--edge); margin: 0 3px 0 7px; }
.cmyk input[type="range"] { width: 110px; height: 18px; margin: 0 -4px; }
input[type="range"] { appearance: none; }
.cmyk input[type="range"]::-webkit-slider-runnable-track { height: 6px; margin: 0 4px; border: 1px solid var(--edge); background: var(--ramp); }
.cmyk input[type="range"]::-webkit-slider-thumb { appearance: none; width: 8px; height: 7px; margin: 5px -4px 0; background: #ccc; clip-path: polygon(50% 0, 100% 50%, 100% 100%, 0 100%, 0 50%); }
.c { --ramp: linear-gradient(90deg, #fbdbd9, #0092cf 85%); }
.m { --ramp: linear-gradient(90deg, #27b3dc, #7b2d86); }
.y { --ramp: linear-gradient(90deg, #3d9ad6, #61992e); }
.k { --ramp: linear-gradient(90deg, #35a0cc, #0a1a26); }
.trio { display: flex; width: 40px; border: 1px solid #222; margin-top: -4px; background: #222; }
.trio > * { width: 12px; height: 12px; margin-right: 1px; }
.bk { background: #000; } .wh { background: #fff; }
.spectrum { height: 23px; width: 294px; margin: 11px 0 0 1px; border: 1px solid #222; background: linear-gradient(#fff, transparent 45%, transparent 50%, #000e), linear-gradient(90deg, #e2001a, #ffed00 16%, #5ba61a 34%, #4ab4e6 54%, #2e3c98 68%, #b3208a 86%, #e2001a); }

.looks { border: 1px solid var(--edge); height: 269px; }
.look { height: 25px; display: flex; align-items: center; border-bottom: 1px solid #333; padding-right: 5px; }
.head { padding-left: 2px; }
.head b { margin-left: 26px; font-weight: bold; }
.thumb { width: 19px; height: 19px; background: #fff; border: 1px solid #222; }
.ey { width: 25px; height: 24px; display: grid; place-items: center; border-right: 1px solid #333; color: #b8b8b8; }
.dim { color: #6c6c6c; }
.look > .tri { margin: 0 -12px 0 4px; }
.nm { width: 77px; margin-left: 22px; }
.look > .tri + .nm { margin-left: 22px; }
.sub { background: #565656; }
.sub .nm { margin-left: 42px; }
.cur { background: #576378; }
.chip { width: 17px; height: 17px; border: 1px solid #fff; outline: 1px solid #222; background: #222; padding: 1px; }
.chip.fill { background: var(--blue); border: 2px solid #fff; box-shadow: inset 0 0 0 1px #222; }
.mark { position: absolute; left: 4px; right: 1px; top: 528px; height: 34px; border: 2px solid #f00; }

.chars { padding: 6px 92px 0 5px; }
.touch { width: 187px; height: 24px; display: flex; align-items: center; gap: 7px; padding-left: 20px; border: 1px solid #2c2c2c; background: linear-gradient(#5e5e5e, #505050); }
.full { margin-top: 7px; width: 219px; }
.full .drop { width: 18px; }
.full input { font-family: var(--ui); }
.ficon { background: var(--field); padding: 3px 1px 0 2px; }
.chars hr { margin: 6px 0 5px; }
.cgrid { display: grid; grid-template-columns: 21px 81px 36px 81px; row-gap: 7px; }
.gl { font: 17px/19px "Liberation Serif", serif; color: #c8c8c8; display: flex; align-items: center; }
.gl:nth-child(4n + 3) { padding-left: 15px; }
.gl small { font-size: 12px; }
.sans { font: 12px/19px "Liberation Sans", sans-serif; }
.gl.va { flex-direction: column; align-items: flex-start; justify-content: center; gap: 2px; }
.va span { font: bold 11px/12px "Liberation Sans", sans-serif; background: #b4b4b4; color: #222; width: 18px; text-align: center; }
.va b { width: 18px; text-align: center; line-height: 13px; }
.bs { font: 13px/19px "Liberation Serif", serif; }
.caps { display: flex; gap: 14px; font: 15px/15px "Liberation Serif", serif; padding-left: 3px; height: 17px; align-items: center; }
.caps button { line-height: 15px; }
.caps button:nth-child(3) { margin-left: 24px; }
.caps button:nth-child(5) { margin-left: 30px; }
.caps button:nth-child(6) { margin-left: 6px; }
.caps small, .caps sup, .caps sub { font-size: 11px; line-height: 8px; }
.caps sup, .caps sub { font-size: 8px; }
.lang { grid-template-columns: 102px 36px 81px; }
select { appearance: none; height: 19px; padding-left: 6px; border: 1px solid var(--edge); background: linear-gradient(45deg, transparent 50%, #e4e4e4 50%) right 9px center / 4px 5px no-repeat, linear-gradient(-45deg, transparent 50%, #e4e4e4 50%) right 5px center / 4px 5px no-repeat, linear-gradient(#333, #333) right 18px center / 1px 13px no-repeat, linear-gradient(#5e5e5e, #505050); }
.gl.aa { padding-left: 15px; }

/* floating transform panel */
.float { position: absolute; left: 245px; top: 453px; width: 232px; height: 163px; background: var(--bg); border: 1px solid #222; border-radius: 4px 4px 0 0; box-shadow: 0 1px 4px #0006; overflow: hidden; }
.fhead { height: 13px; display: flex; justify-content: flex-end; align-items: center; gap: 9px; padding-right: 5px; background: linear-gradient(#3a3a3a, #2b2b2b); }
.float .ptabs { border-top: 1px solid #222; }
.float .ptabs .act { padding-left: 4px; padding-right: 4px; }
.float .cut { padding: 0 2px 0 4px; font-weight: 500; }
.fgrid { display: grid; grid-template-columns: 29px 1fr 37px; row-gap: 7px; align-items: center; padding: 6px 5px 5px; }
.fref { grid-row: 1 / 3; }
.float .chain { grid-row: 1 / 3; grid-column: 3; height: 24px; width: 24px; margin-left: 5px; }
.frow { display: flex; align-items: center; grid-column: 2; margin-right: 0; }
.frow label { width: 19px; display: flex; justify-content: flex-end; margin-right: 5px; flex: none; font-size: 10px; }
.frow label:first-child { width: 13px; }
.frow > input { width: 57px; height: 19px; border: 1px solid var(--edge); flex: none; }
.frow label:nth-of-type(2) { width: 18px; margin: 0 4px 0 0; }
.r3 .combo { width: 55px; }
.r3 label:nth-of-type(2) { margin: 0 5px 0 2px; }
.fchecks { margin: 0 5px; padding-top: 7px; border-top: 1px solid #333; display: flex; flex-direction: column; gap: 6px; }
.fchecks label, .checks label, .actions label { display: flex; align-items: center; gap: 5px; }
input[type="checkbox"] { appearance: none; width: 12px; height: 12px; border: 1px solid #262626; background: linear-gradient(#5e5e5e, #505050); display: grid; place-items: center; flex: none; }
input[type="checkbox"]:checked::before { content: ""; width: 4px; height: 9px; border: solid #e4e4e4; border-width: 0 2px 2px 0; transform: rotate(38deg); margin-top: -4px; }

/* transform dialog */
.dialog { position: absolute; left: 730px; top: 146px; width: 362px; height: 592px; padding: 0 6px 6px; border: 1px solid #10202c; border-radius: 7px; background: linear-gradient(#a9c3da, #9fbfdb 20%, #d5e2ee 28%, #5b8dbb 28%, #4f86b8); box-shadow: inset 0 0 0 1px #d6e6f3, 0 0 12px 4px #0f2a3ccc; font-size: 12px; line-height: 16px; display: flex; flex-direction: column; }
.dialog h2 { margin: 1px -5px 0; padding: 5px 6px 0; height: 28px; font: 12px/18px var(--ui); color: #000; flex: none; border-radius: 6px 6px 0 0; background: radial-gradient(ellipse 90px 16px at 42px 14px, #dce6f0, transparent), linear-gradient(100deg, #9ab8d0 25%, #5b8cb6 42% 60%, #9dbad3 75%); }
.dbody { flex: 1; background: var(--bg); outline: 1px solid #c5dcee; padding: 23px 17px 0; display: flex; flex-direction: column; }
fieldset { margin: 0 0 16px; padding: 5px 9px 0; border: 1px solid #2b2b2b; height: 90px; min-width: 0; flex: none; }
legend { padding: 0 6px 0 5px; margin-left: -5px; line-height: 16px; }
.drow { display: flex; align-items: center; height: 30px; position: relative; }
.drow label { width: 58px; text-align: right; margin-right: 5px; }
.dialog input:not([type]) { width: 77px; height: 18px; background: var(--field); border: 1px solid var(--edge); color: #111; padding: 0 0 0 3px; margin-left: 8px; }
.dialog .short:not([type]) { width: 57px; }
.dialog .hot:not([type]) { outline: 1px solid var(--orange); }
.seltext { position: absolute; left: 222px; padding: 0 1px; background: #3399ff; color: #fff; line-height: 15px; }
.dialog input[type="range"] { width: 149px; height: 16px; }
.dialog input[type="range"]::-webkit-slider-runnable-track { height: 4px; background: #333; border: 1px solid #262626; }
.dialog input[type="range"]::-webkit-slider-thumb { appearance: none; width: 10px; height: 11px; margin-top: -6px; background: linear-gradient(#6c6c6c, #555); box-shadow: inset 0 0 0 1px #2a2a2a; clip-path: polygon(50% 0, 100% 40%, 100% 100%, 0 100%, 0 40%); }
.dialog input.focus[type="range"]::-webkit-slider-thumb { height: 13px; margin-top: -7px; background: linear-gradient(-45deg, transparent 70%, var(--orange) 70%), linear-gradient(45deg, transparent 70%, var(--orange) 70%), #555; box-shadow: inset 0 0 0 1px var(--orange); }
.rot { height: 76px; padding-top: 12px; }
.opts { height: 148px; margin-bottom: 20px; padding-top: 4px; }
.checks { display: grid; grid-template-columns: 98px 1fr; grid-auto-rows: 25px; padding-bottom: 5px; border-bottom: 1px solid #333; }
.copies { display: flex; align-items: center; padding-top: 11px; }
.copies label { width: 86px; text-align: right; margin: 0 -2px 0 43px; }
.actions { display: flex; align-items: center; gap: 6px; }
.actions button { width: 90px; height: 24px; border: 1px solid #262626; background: linear-gradient(#606060, #505050); }
.actions .ok { width: 92px; height: 26px; border-width: 2px; }
```
